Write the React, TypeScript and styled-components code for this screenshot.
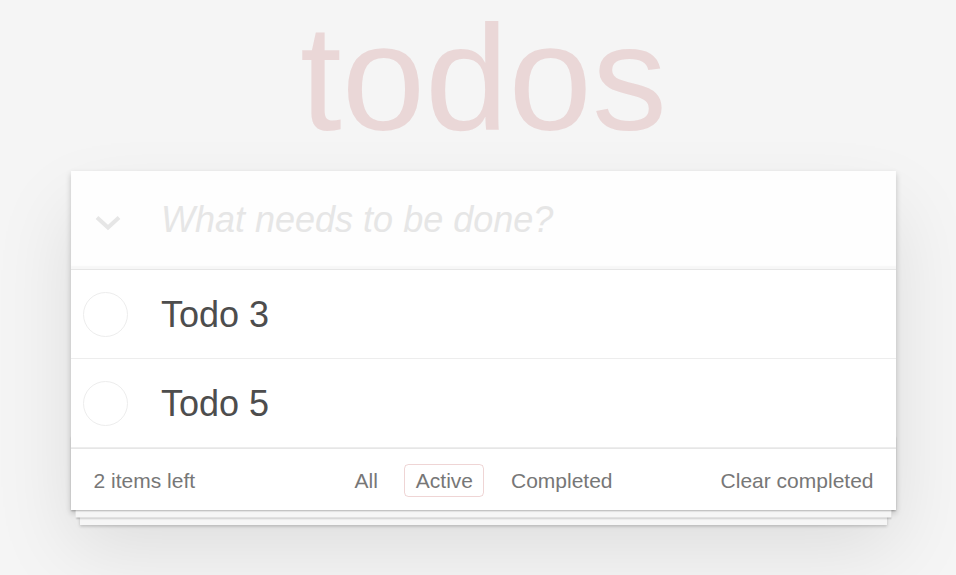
import React, { useState } from 'react';
import styled, { createGlobalStyle } from 'styled-components';

const GlobalStyle = createGlobalStyle`
  html, body {
    margin: 0;
    padding: 0;
  }

  body {
    min-height: 100vh;
    background: #f5f5f5;
    color: #4d4d4d;
    font: 300 21px 'Liberation Sans', Arial, Helvetica, sans-serif;
    line-height: 1.4em;
  }
`;

const Page = styled.div`
  width: 825px;
  margin-left: 71px;
  padding: 4px 0 40px;
`;

const Title = styled.h1`
  margin: 0;
  height: 148px;
  font-size: 150px;
  line-height: 148px;
  font-weight: 100;
  text-align: center;
  color: rgba(175, 47, 47, 0.15);
  text-rendering: optimizeLegibility;
`;

const TodoApp = styled.section`
  position: relative;
  margin-top: 19px;
  background: #fff;
  box-shadow: 0 3px 6px 0 rgba(0, 0, 0, 0.2), 0 37.5px 75px 0 rgba(0, 0, 0, 0.1);
`;

const Header = styled.header`
  display: flex;
  align-items: center;
  height: 98px;
  background: rgba(0, 0, 0, 0.003);
  box-shadow: inset 0 -3px 1.5px rgba(0, 0, 0, 0.03);
`;

const ToggleAll = styled.button`
  display: flex;
  align-items: center;
  width: 90px;
  height: 100%;
  padding: 6px 0 0 24px;
  border: 0;
  background: none;
  cursor: pointer;
`;

const NewTodo = styled.input`
  flex: 1;
  min-width: 0;
  height: 100%;
  padding: 0 24px 0 0;
  border: 0;
  background: transparent;
  font: inherit;
  font-size: 36px;
  color: inherit;
  outline: none;

  &::placeholder {
    font-style: italic;
    font-weight: 300;
    color: #e6e6e6;
  }
`;

const Main = styled.section`
  position: relative;
  z-index: 2;
  background: #fff;
  border-top: 1px solid #e6e6e6;
`;

const TodoList = styled.ul`
  margin: 0;
  padding: 0;
  list-style: none;
`;

const TodoItem = styled.li`
  display: flex;
  align-items: center;
  font-size: 36px;
  border-bottom: 1px solid #ededed;
`;

const Toggle = styled.button<{ $done: boolean }>`
  flex: none;
  width: 45px;
  height: 45px;
  margin: 0 33px 0 12px;
  padding: 0;
  border: 1.4px solid #ededed;
  border-radius: 50%;
  background: none;
  cursor: pointer;
  color: #5dc2af;
  font-size: 26px;
  line-height: 1;
`;

const Label = styled.label<{ $done: boolean }>`
  flex: 1;
  padding: 22.5px 22.5px 22.5px 0;
  line-height: 43.2px;
  word-break: break-all;
  color: ${p => (p.$done ? '#d9d9d9' : '#4d4d4d')};
  text-decoration: ${p => (p.$done ? 'line-through' : 'none')};
`;

const Footer = styled.footer`
  position: relative;
  display: grid;
  grid-template-columns: 1fr auto 1fr;
  align-items: center;
  height: 30px;
  padding: 15px 22.5px 16px;
  color: #777;
  border-top: 1px solid #e6e6e6;

  &::before {
    content: '';
    position: absolute;
    right: 0;
    bottom: 0;
    left: 0;
    height: 75px;
    overflow: hidden;
    pointer-events: none;
    box-shadow: 0 1.5px 1.5px rgba(0, 0, 0, 0.2),
      0 12px 0 -4.5px #f6f6f6,
      0 13.5px 1.5px -4.5px rgba(0, 0, 0, 0.2),
      0 24px 0 -9px #f6f6f6,
      0 25.5px 3px -9px rgba(0, 0, 0, 0.2);
  }
`;

const Count = styled.span`
  justify-self: start;
  line-height: 30px;
`;

const Filters = styled.ul`
  display: flex;
  gap: 15px;
  margin: 0;
  padding: 0;
  list-style: none;
`;

const FilterLink = styled.a<{ $selected: boolean }>`
  display: block;
  padding: 4.5px 10.5px;
  line-height: 22px;
  color: inherit;
  text-decoration: none;
  border: 1.5px solid ${p => (p.$selected ? 'rgba(175, 47, 47, 0.2)' : 'transparent')};
  border-radius: 4.5px;
  cursor: pointer;

  &:hover {
    border-color: ${p => (p.$selected ? 'rgba(175, 47, 47, 0.2)' : 'rgba(175, 47, 47, 0.1)')};
  }
`;

const ClearButton = styled.button`
  justify-self: end;
  padding: 0;
  border: 0;
  background: none;
  font: inherit;
  color: inherit;
  line-height: 30px;
  cursor: pointer;
`;

const Chevron = () => (
  <svg width="26" height="16" viewBox="0 0 26 16">
    <polyline points="2,2.5 13,12.5 24,2.5" fill="none" stroke="#e6e6e6" strokeWidth="4" />
  </svg>
);

type Todo = { id: number; title: string; done: boolean };

const App: React.FC = () => {
  const [todos, setTodos] = useState<Todo[]>([
    { id: 3, title: 'Todo 3', done: false },
    { id: 5, title: 'Todo 5', done: false }
  ]);
  const [filter, setFilter] = useState('active');

  const filters = [
    { value: 'all', label: 'All' },
    { value: 'active', label: 'Active' },
    { value: 'completed', label: 'Completed' }
  ];

  const left = todos.filter(t => !t.done).length;
  const toggle = (id: number) =>
    setTodos(todos.map(t => (t.id === id ? { ...t, done: !t.done } : t)));

  return (
    <>
      <GlobalStyle />
      <Page>
        <Title>todos</Title>
        <TodoApp>
          <Header>
            <ToggleAll aria-label="Mark all as complete">
              <Chevron />
            </ToggleAll>
            <NewTodo placeholder="What needs to be done?" />
          </Header>
          <Main>
            <TodoList>
              {todos.map(todo => (
                <TodoItem key={todo.id}>
                  <Toggle $done={todo.done} onClick={() => toggle(todo.id)}>
                    {todo.done ? '✓' : ''}
                  </Toggle>
                  <Label $done={todo.done}>{todo.title}</Label>
                </TodoItem>
              ))}
            </TodoList>
          </Main>
          <Footer>
            <Count>
              {left} {left === 1 ? 'item' : 'items'} left
            </Count>
            <Filters>
              {filters.map(f => (
                <li key={f.value}>
                  <FilterLink $selected={filter === f.value} onClick={() => setFilter(f.value)}>
                    {f.label}
                  </FilterLink>
                </li>
              ))}
            </Filters>
            <ClearButton onClick={() => setTodos(todos.filter(t => !t.done))}>
              Clear completed
            </ClearButton>
          </Footer>
        </TodoApp>
      </Page>
    </>
  );
};

export default App;
